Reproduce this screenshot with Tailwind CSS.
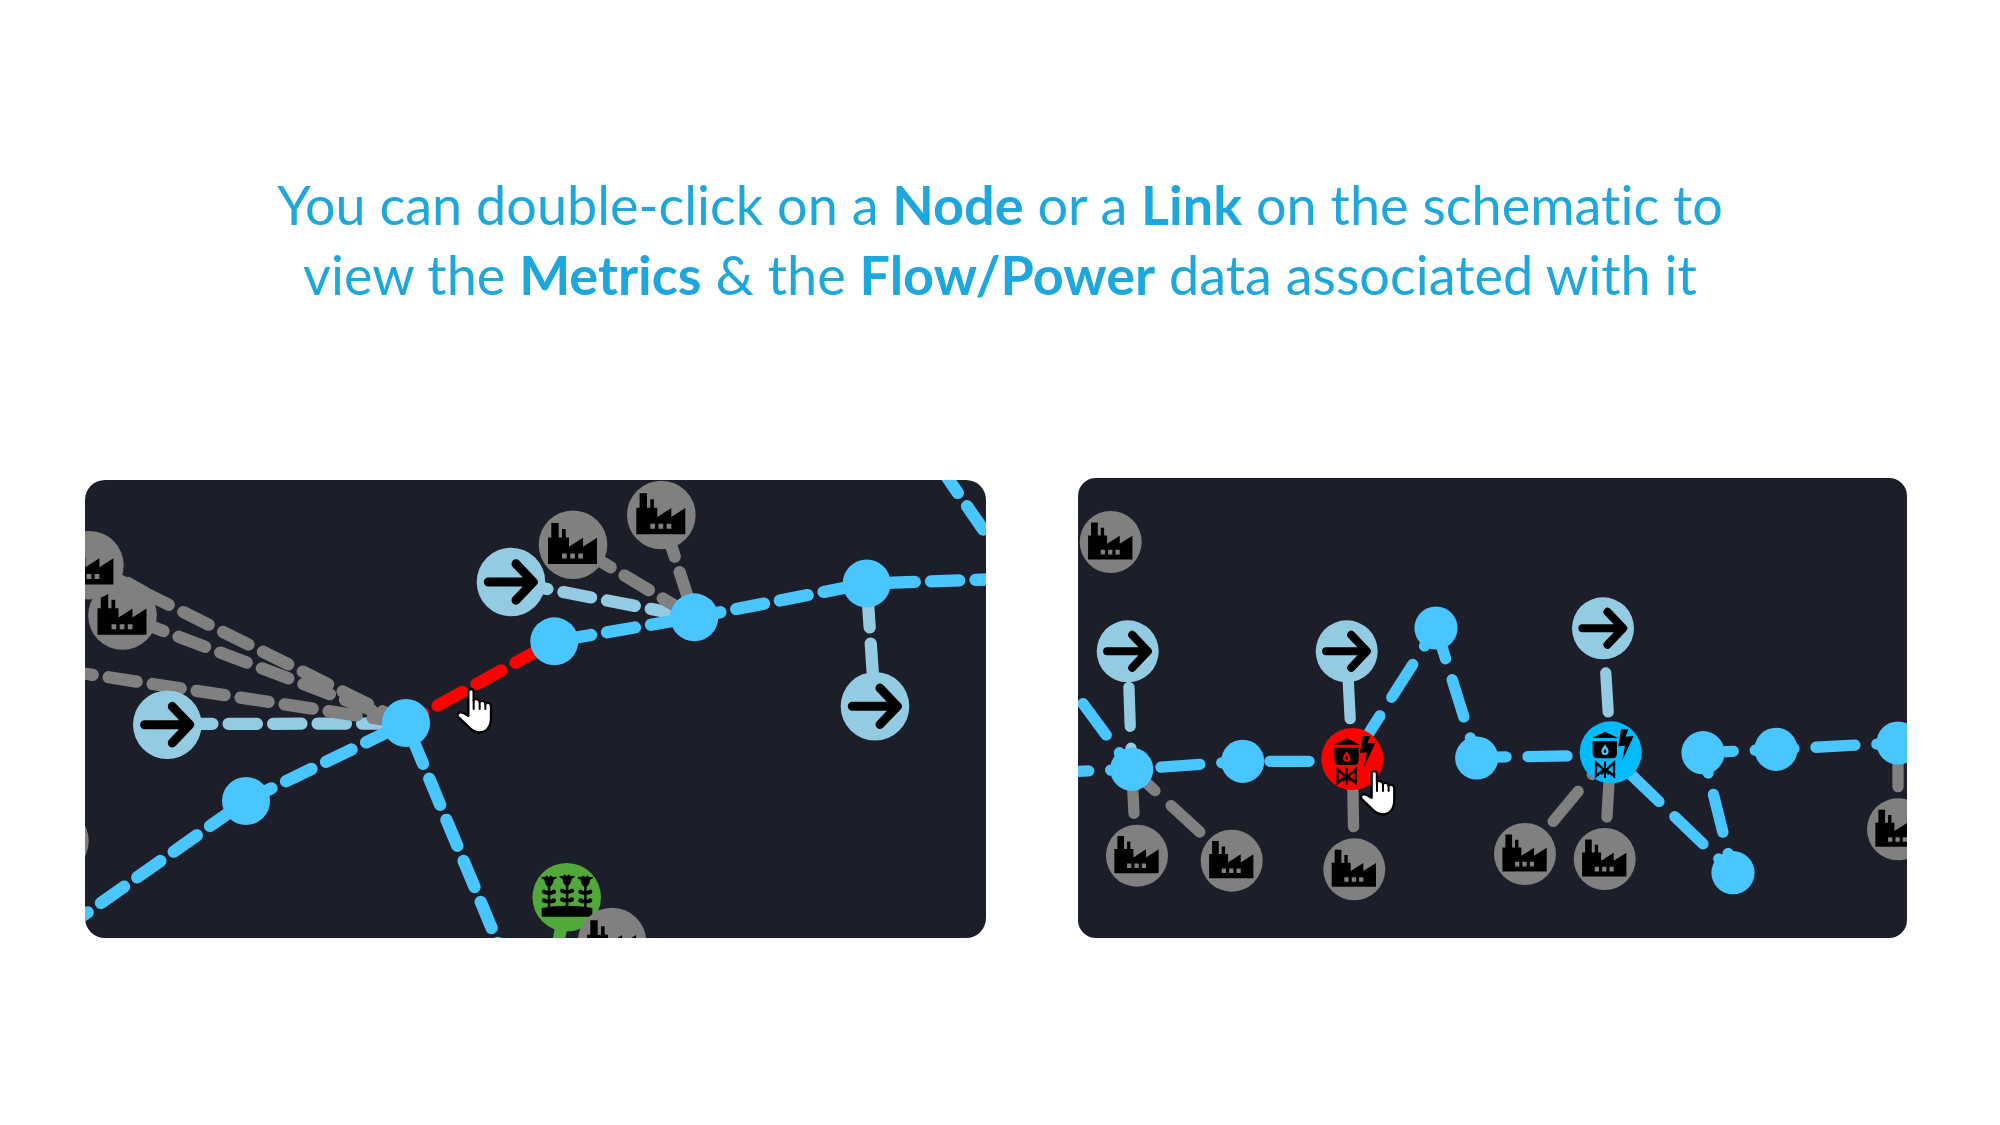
<!DOCTYPE html>
<html lang="en">
<head>
<meta charset="utf-8">
<meta name="viewport" content="width=device-width, initial-scale=1">
<title>Schematic help: nodes and links</title>
<script src="https://cdn.jsdelivr.net/npm/@tailwindcss/browser@4"></script>
</head>
<body class="bg-white font-['Lato',sans-serif]">

<!-- Shared symbols for both schematics -->
<svg class="absolute size-0" aria-hidden="true">
  <defs>
    <g id="factory">
      <circle r="34.3" fill="#808080"/>
      <path fill="#000" d="M-25 19.3V-7.3h3.3v-14.4h7.4v14.4h3.3v-8.4h3.7v8.4H-4V2L10-7V2L24-7v26.3z"/>
      <path fill="#808080" d="M-11 8.7h4.7v5H-11zM-2.8 8.7h4.7v5h-4.7zM5.3 8.7H10v5H5.3z"/>
    </g>
    <g id="inflow">
      <circle r="34.3" fill="#93cce2"/>
      <path d="M-22.7 0H21M5 -18.2L22.3 0L5 18.2" fill="none" stroke="#000" stroke-width="9" stroke-linecap="round" stroke-linejoin="round"/>
    </g>
    <g id="plant">
      <g transform="scale(.3333)">
        <path d="M-39 -43L0 -62L39 -43z"/>
        <path d="M-37 -34H36V3Q36 18 21 18H-20Q-37 18-37 3z"/>
        <path fill="currentColor" d="M0 -24C5-14 11-10 11-3A11 11 0 0 1-11-3C-11-10-5-14 0-24z"/>
        <path d="M0 -11C2-7 4-5 4-2A4 4 0 0 1-4-2C-4-5-2-7 0-11z"/>
        <path d="M48 -69H70L62 -47L86 -49L51 26L60 -20L40 -18z"/>
        <path d="M-27 31V72L-4 52zM27 31V72L4 52z" fill="none" stroke="#000" stroke-width="7"/>
        <path d="M0 27V77M-12 66L0 54L12 66" fill="none" stroke="#000" stroke-width="6"/>
      </g>
    </g>
    <g id="stalk">
      <path d="M-22 0C-12 2-9 1-7-4L-1 2L6-4C8 1 12 3 22 0V6C16 6 14 9 13 14C12 24 7 27 4 30L4 44C9 43 9 39 13 39C20 38 20 42 21 46C20 52 14 54 4 54L4 70C9 69 9 65 13 65C20 64 20 68 21 72C20 78 14 80 4 80V95H-4V80C-14 80-20 78-21 72C-20 68-20 64-13 65C-9 65-9 69-4 70V54C-14 54-20 52-21 46C-20 42-20 38-13 39C-9 39-9 43-4 44V30C-7 27-12 24-13 14C-14 9-16 6-22 6z"/>
    </g>
    <g id="hand">
      <path transform="scale(.3333)" fill="#fff" stroke="#000" stroke-width="7" stroke-linejoin="round" d="M-8 80V8Q-8 0 0 0Q8 0 8 8V33Q11 29 17 30Q26 32 26 39Q30 34 36 36Q43 38 43 45Q47 40 53 42Q60 44 60 52V88C60 115 45 130 25 130C11 130 3 124-5 116L-38 84C-43 77-39 70-32 70C-23 70-15 76-8 80z"/>
      <path transform="scale(.3333)" fill="none" stroke="#000" stroke-width="6" stroke-linecap="round" d="M8 33V60M26 39V60M43 45V60"/>
    </g>
  </defs>
</svg>

<main class="pt-[170px] pb-16">
  <h1 class="text-center text-[54px] leading-[70px] font-normal text-[#1ea7dd] [font-variant-ligatures:none]">
    You can double-click on a <strong class="font-bold">Node</strong> or a <strong class="font-bold">Link</strong> on the schematic to<br>
    view the <strong class="font-bold">Metrics</strong> &amp; the <strong class="font-bold">Flow/Power</strong> data associated with it
  </h1>

  <div class="mt-[168px] flex items-end gap-[92px] pr-[93px] pl-[85px]">

    <!-- Link selected -->
    <figure class="min-w-0 flex-[901] overflow-hidden rounded-[20px] bg-[#1c1f29]">
      <svg class="block w-full" viewBox="85 480 901 458" role="img" aria-label="Schematic with a link selected">
        <g fill="none" stroke-width="12.3" stroke-linecap="round" stroke-dasharray="28.3 16.2">
          <g stroke="#93cce2">
            <path d="M167.3 724L406 723.5" stroke-dashoffset="27.7"/>
            <path d="M511 582L694.3 617.3" stroke-dashoffset="35.7"/>
            <path d="M866.7 583.5L875 706.3" stroke-dashoffset="28.8"/>
          </g>
          <g stroke="#808080">
            <path d="M122.5 615.5L406 723" stroke-dashoffset="29"/>
            <path d="M89.4 565.3L406 723" stroke-dashoffset="28.6"/>
            <path d="M128 583L144 592" stroke-dasharray="none"/>
            <path d="M64.7 670.5L406 723"/>
            <path d="M573 544.7L694.3 617.3" stroke-dashoffset="28.9"/>
            <path d="M661.3 515L694.3 617.3" stroke-dashoffset="29"/>
          </g>
          <g stroke="#49c5ff">
            <path d="M246 800.7L406 723"/>
            <path d="M246 800.7L66 927.6" stroke-dashoffset="28.8"/>
            <path d="M406 723L505 960" stroke-dashoffset="28.6"/>
            <path d="M554.3 641.3L694.3 617.3" stroke-dashoffset="35.5"/>
            <path d="M694.3 617.3L866.7 583.5" stroke-dashoffset="1.8"/>
            <path d="M866.7 583.5L1010 578.7" stroke-dashoffset="24.7"/>
            <path d="M941.8 469.6L1000 554"/>
          </g>
          <path d="M406 723L554.3 641.3" stroke="#f00" stroke-dashoffset="8.5"/>
          <path d="M566.7 897.3L556 955" stroke="#52a83a" stroke-dasharray="none"/>
        </g>
        <use href="#factory" x="122.5" y="615.5"/>
        <use href="#factory" x="89.4" y="565.3"/>
        <use href="#factory" x="54.4" y="841"/>
        <use href="#factory" x="573" y="544.7"/>
        <use href="#factory" x="661.3" y="515"/>
        <use href="#inflow" x="167.3" y="724.7"/>
        <use href="#inflow" x="511" y="582"/>
        <use href="#inflow" x="875" y="706.3"/>
        <g fill="#49c5ff">
          <circle cx="406" cy="723" r="24"/>
          <circle cx="246" cy="801" r="24"/>
          <circle cx="554.3" cy="641.3" r="24"/>
          <circle cx="694.3" cy="617.3" r="24"/>
          <circle cx="866.7" cy="583.5" r="24"/>
        </g>
        <g transform="translate(566.7 897.3)">
          <circle r="34.3" fill="#52a83a"/>
          <g transform="scale(.3333)">
            <use href="#stalk" x="-53" y="-62"/>
            <use href="#stalk" x="1" y="-65"/>
            <use href="#stalk" x="56" y="-62"/>
            <path d="M-75 58V32Q0 18 77 32V58z"/>
          </g>
        </g>
        <use href="#factory" x="612" y="942"/>
        <use href="#hand" x="471" y="689"/>
      </svg>
    </figure>

    <!-- Node selected -->
    <figure class="min-w-0 flex-[829] overflow-hidden rounded-[18px] bg-[#1c1f29]">
      <svg class="block w-full" viewBox="1078 478 829 460" role="img" aria-label="Schematic with a node selected">
        <g fill="none" stroke-width="11.3" stroke-linecap="round" stroke-dasharray="39 22">
          <g stroke="#93cce2">
            <path d="M1127.7 651.3L1131.7 769.3" stroke-dashoffset="25"/>
            <path d="M1346.7 651.3L1352.3 759" stroke-dashoffset="32.5"/>
            <path d="M1603 628.3L1610.7 752.3" stroke-dashoffset="16.2"/>
          </g>
          <g stroke="#808080">
            <path d="M1131.7 769.3L1134.5 823" stroke-dashoffset="56"/>
            <path d="M1131.7 769.3L1214 845" stroke-dashoffset="7.4"/>
            <path d="M1352.3 759L1353.7 835" stroke-dashoffset="32.3"/>
            <path d="M1610.7 752.3L1546 830" stroke-dashoffset="10.1"/>
            <path d="M1610.7 752.3L1606.5 825" stroke-dashoffset="35.2"/>
            <path d="M1898 743L1898 800" stroke-dashoffset="56.3"/>
          </g>
          <g stroke="#49c5ff">
            <path d="M1083 703.7L1131.7 769.3"/>
            <path d="M1049.7 772.5L1131.7 769.3"/>
            <path d="M1131.7 769.3L1242.7 761.3" stroke-dashoffset="31.7"/>
            <path d="M1242.7 761.3L1352.3 761.3" stroke-dashoffset="33.7"/>
            <path d="M1352.3 759L1436 628" stroke-dashoffset="48.8"/>
            <path d="M1436 628L1476.7 758" stroke-dashoffset="6.8"/>
            <path d="M1476.7 757.3L1610.7 755.3" stroke-dashoffset="9.7"/>
            <path d="M1610.7 755L1733 872.7" stroke-dashoffset="33"/>
            <path d="M1703 752.7L1733 872.7" stroke-dashoffset="18.1"/>
            <path d="M1703 752.7L1776 749.3" stroke-dashoffset="8.7"/>
            <path d="M1776 749.3L1898 743" stroke-dashoffset="21"/>
          </g>
        </g>
        <g transform="translate(1110.7 542) scale(.904)"><use href="#factory"/></g>
        <g transform="translate(1137 855.7) scale(.904)"><use href="#factory"/></g>
        <g transform="translate(1231.7 860.7) scale(.904)"><use href="#factory"/></g>
        <g transform="translate(1354.3 869.3) scale(.904)"><use href="#factory"/></g>
        <g transform="translate(1525 854) scale(.904)"><use href="#factory"/></g>
        <g transform="translate(1604.7 859) scale(.904)"><use href="#factory"/></g>
        <g transform="translate(1898 829.3) scale(.904)"><use href="#factory"/></g>
        <g transform="translate(1127.7 651.3) scale(.904)"><use href="#inflow"/></g>
        <g transform="translate(1346.7 651.3) scale(.904)"><use href="#inflow"/></g>
        <g transform="translate(1603 628.3) scale(.904)"><use href="#inflow"/></g>
        <g fill="#49c5ff">
          <circle cx="1131.7" cy="769.3" r="21.6"/>
          <circle cx="1242.7" cy="761.3" r="21.6"/>
          <circle cx="1436" cy="628" r="21.6"/>
          <circle cx="1476.7" cy="758" r="21.6"/>
          <circle cx="1703" cy="752.7" r="21.6"/>
          <circle cx="1776" cy="749.3" r="21.6"/>
          <circle cx="1898" cy="743" r="21.6"/>
          <circle cx="1733" cy="872.7" r="21.6"/>
        </g>
        <circle cx="1352.3" cy="759" r="31" fill="#f00"/>
        <use href="#plant" x="1346.7" y="759" class="text-[#f00]"/>
        <circle cx="1610.7" cy="752.3" r="31" fill="#00bcff"/>
        <use href="#plant" x="1605" y="752.3" class="text-[#49c5ff]"/>
        <use href="#hand" x="1374.3" y="771"/>
      </svg>
    </figure>
  </div>
</main>
</body>
</html>
